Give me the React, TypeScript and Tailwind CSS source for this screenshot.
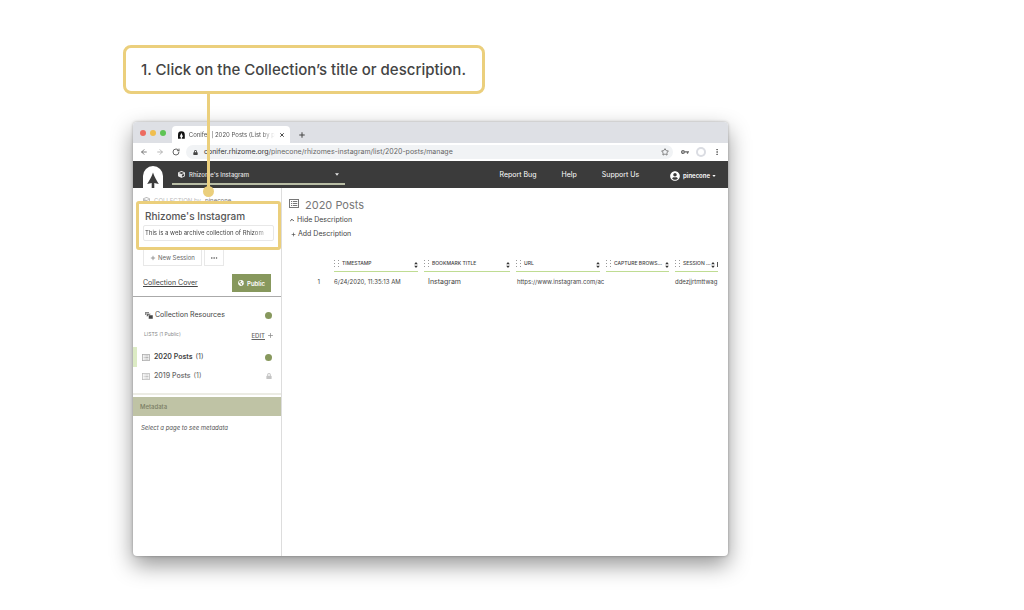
import React from "react";
import {
  ArrowLeft,
  ArrowRight,
  ChevronUp,
  MoreHorizontal,
  MoreVertical,
  Plus,
  RotateCw,
  Star,
  X,
} from "lucide-react";
import { FaCube, FaGlobeAmericas, FaLock, FaUserCircle } from "react-icons/fa";

function ListIcon({ className }: { className: string }) {
  return (
    <svg viewBox="0 0 20 18" className={className} fill="none" stroke="currentColor" aria-hidden="true">
      <rect x="1" y="1" width="18" height="16" strokeWidth="2" />
      <path d="M4 5h2.500M4 9h2.500M4 13h2.500M8 5h8.500M8 9h8.500M8 13h8.500" strokeWidth="2.200" />
    </svg>
  );
}

function ConiferLogo() {
  return (
    <svg viewBox="0 0 20 22" className="h-[22px] w-5" aria-label="Conifer">
      <path d="M0 22V10a10 10 0 0 1 20 0v12z" fill="#fff" />
      <path d="M10 6.500 C11.500 11 13.500 14 15.800 18 L11.300 17 V22 H8.700 V17 L4.200 18 C6.500 14 8.500 11 10 6.500z" fill="#3b3b3b" />
    </svg>
  );
}

function Favicon() {
  return (
    <svg viewBox="0 0 20 22" className="h-2 w-[7px]" aria-hidden="true">
      <path d="M0 22V10a10 10 0 0 1 20 0v12z" fill="#111" />
      <path d="M10 5 L15 16 H12 V22 H8 V16 H5z" fill="#fff" />
    </svg>
  );
}

function KeyIcon() {
  return (
    <svg viewBox="0 0 16 8" className="ml-2 h-1 w-2" fill="none" stroke="currentColor" strokeWidth="2.500" aria-hidden="true">
      <circle cx="4" cy="4" r="2.700" />
      <path d="M7 3.500h9M13 3.500v4" />
    </svg>
  );
}

function Caret({ className }: { className: string }) {
  return (
    <svg viewBox="0 0 8 5" className={className} fill="currentColor" aria-hidden="true">
      <path d="M0 0h8L4 5z" />
    </svg>
  );
}

function Grip() {
  return (
    <svg viewBox="0 0 5 8" className="h-2 w-[5px] shrink-0" fill="#999" aria-hidden="true">
      <path d="M0 0h1v1H0zM4 0h1v1H4zM0 3h1v1H0zM4 3h1v1H4zM0 6h1v1H0zM4 6h1v1H4z" />
    </svg>
  );
}

function SortIcon() {
  return (
    <svg viewBox="0 0 4 6" className="mt-[2px] h-[6px] w-1 shrink-0" fill="#333" aria-hidden="true">
      <path d="M2 0 3.800 2.200H.2zM2 6 .2 3.800h3.600z" />
    </svg>
  );
}

function ResourcesIcon() {
  return (
    <svg viewBox="0 0 16 14" className="h-[7px] w-2" aria-hidden="true">
      <path d="M0 0h8v6H0z" fill="#888" />
      <path d="M3 3h8v6H3z" fill="#666" stroke="#fff" strokeWidth="1" />
      <path d="M7 6h9v8H7z" fill="#444" stroke="#fff" strokeWidth="1" />
    </svg>
  );
}

function Callout() {
  return (
    <div className="relative -ml-[10px] w-fit rounded-lg border-3 border-[#ebcf7c] bg-white py-3 pr-4 pl-[15px]">
      <p className="text-[15px] leading-[19px] font-medium whitespace-nowrap text-[#444]">
        1. Click on the Collection’s title or description.
      </p>
      <span className="absolute top-full left-[81px] z-20 h-[97px] w-[3px] bg-[#ebcf7c]">
        <span className="absolute bottom-[-9px] left-[-4px] size-[11px] rounded-full bg-[#ebcf7c]" />
      </span>
    </div>
  );
}

function TabBar() {
  return (
    <div className="flex h-[21px] items-end rounded-t-[4px] bg-[#dee0e5] pl-[7px]">
      <div className="flex h-full items-center gap-1 pr-[6px]">
        <span className="size-[6px] rounded-full bg-[#ed6b60]" />
        <span className="size-[6px] rounded-full bg-[#f0be4f]" />
        <span className="size-[6px] rounded-full bg-[#5fc454]" />
      </div>
      <div className="flex h-[17px] w-[118px] items-center gap-1 rounded-t-[4px] bg-white pr-[5px] pl-[6px]">
        <Favicon />
        <span className="flex-1 mask-r-from-85% text-[6px] leading-2 whitespace-nowrap text-[#555]">
          Conifer | 2020 Posts (List by p
        </span>
        <button type="button" aria-label="Close tab" className="text-[#333]">
          <X className="size-[6px]" strokeWidth={3.5} />
        </button>
      </div>
      <button type="button" aria-label="New tab" className="mb-1 ml-2 text-[#444]">
        <Plus className="size-2" strokeWidth={3} />
      </button>
    </div>
  );
}

function AddressBar() {
  return (
    <div className="flex h-[18px] items-center bg-white pr-[7px] pl-[7px] text-[#666]">
      <button type="button" aria-label="Back">
        <ArrowLeft className="size-2" strokeWidth={2.5} />
      </button>
      <button type="button" aria-label="Forward" className="ml-2 text-[#aaa]">
        <ArrowRight className="size-2" strokeWidth={2.5} />
      </button>
      <button type="button" aria-label="Reload" className="ml-2">
        <RotateCw className="size-2" strokeWidth={3} />
      </button>
      <div className="ml-[6px] flex h-[14px] flex-1 items-center rounded-full bg-[#f1f3f5] pr-1 pl-[7px]">
        <FaLock className="mr-[6px] size-[5px] text-[#444]" />
        <span className="flex-1 text-[7px] leading-[10px] whitespace-nowrap text-[#666]">
          <span className="text-[#333]">conifer.rhizome.org</span>
          /pinecone/rhizomes-instagram/list/2020-posts/manage
        </span>
        <Star className="size-2" strokeWidth={2.5} />
      </div>
      <KeyIcon />
      <span className="ml-[7px] flex size-[10px] items-center justify-center rounded-full bg-[#dadce2]">
        <span className="size-[6px] rounded-full bg-white" />
      </span>
      <MoreVertical className="ml-[7px] size-2" strokeWidth={3} />
    </div>
  );
}

function AppHeader() {
  return (
    <header className="flex h-[27px] items-end bg-[#3b3b3b] pr-3 pl-[10px] text-white">
      <ConiferLogo />
      <button
        type="button"
        className="mb-[3px] ml-[9px] flex h-[20px] w-[173px] items-center border-b-2 border-[#b9bda5] pr-[6px] pl-[6px] text-[#e4e4e4]"
      >
        <FaCube className="mr-1 size-[7px]" />
        <span className="text-[6px] font-medium">Rhizome's Instagram</span>
        <Caret className="ml-auto h-[3px] w-1" />
      </button>
      <nav className="ml-auto flex h-full items-center pt-[2px] text-[7px]">
        <a href="#report">Report Bug</a>
        <a href="#help" className="ml-[25px]">
          Help
        </a>
        <a href="#support" className="ml-[25px]">
          Support Us
        </a>
        <button type="button" className="ml-[31px] flex items-center">
          <FaUserCircle className="mr-[3px] size-[10px]" />
          <span className="text-[6px] font-semibold">pinecone</span>
          <Caret className="ml-[2px] h-[2px] w-1" />
        </button>
      </nav>
    </header>
  );
}

function Sidebar() {
  return (
    <aside className="w-[149px] shrink-0 border-r border-[#ddd] text-[#555]">
      <section className="border-b border-[#aaa] pb-1">
        <div className="flex h-[17px] items-end pl-[10px] text-[6px] leading-2 text-[#bbb]">
          <FaCube className="mr-1 mb-[1px] size-[7px]" />
          COLLECTION by
          <a href="#pinecone" className="ml-1 text-[#777] underline">
            pinecone
          </a>
        </div>
        <div className="relative z-10 -mt-1 ml-[3px] rounded-[3px] border-3 border-[#ebcf7c] bg-white px-1 pt-[5px] pb-[6px]">
          <h1 className="pl-[2px] text-[10px] leading-[15px] font-medium whitespace-nowrap text-[#555]">
            Rhizome's Instagram
          </h1>
          <div className="mt-px rounded-[2px] border border-[#e8e8e8] px-px">
            <p className="mask-r-from-85% text-[6px] leading-[14px] whitespace-nowrap text-[#444]">
              This is a web archive collection of Rhizom
            </p>
          </div>
        </div>
        <div className="flex gap-[2px] pl-[10px]">
          <button
            type="button"
            className="flex h-4 w-[59px] items-center justify-center gap-[2px] border border-t-0 border-[#e8e8e8] text-[6px] text-[#666]"
          >
            <Plus className="size-[6px]" strokeWidth={2.5} />
            New Session
          </button>
          <button
            type="button"
            aria-label="More actions"
            className="flex h-4 w-5 items-center justify-center border border-t-0 border-[#e8e8e8]"
          >
            <MoreHorizontal className="size-2" strokeWidth={2} />
          </button>
        </div>
        <div className="mt-2 flex items-center justify-between pr-[10px] pl-[10px]">
          <a href="#cover" className="text-[7px] text-[#444] underline">
            Collection Cover
          </a>
          <button
            type="button"
            className="flex h-[18px] w-[39px] items-center justify-center gap-[3px] bg-[#87985d] text-[6px] font-semibold text-white"
          >
            <FaGlobeAmericas className="size-[6px]" />
            Public
          </button>
        </div>
      </section>

      <section className="border-b-2 border-[#ecece4] pt-[11px] pb-2">
        <div className="flex h-[14px] items-center pr-[9px] pl-3">
          <ResourcesIcon />
          <span className="ml-[2px] text-[7px] text-[#444]">Collection Resources</span>
          <span className="ml-auto size-[7px] rounded-full bg-[#87985d]" />
        </div>
        <div className="mt-[7px] flex h-3 items-center pr-[7px] pl-[11px] text-[5px] text-[#888]">
          LISTS (1 Public)
          <button type="button" className="ml-auto text-[6px] font-medium text-[#666] underline">
            EDIT
          </button>
          <button type="button" aria-label="Add list" className="ml-[2px]">
            <Plus className="size-[7px]" strokeWidth={2.5} />
          </button>
        </div>
        <ul className="mt-[6px] text-[7px]">
          <li className="flex h-[20px] items-center border-l-4 border-[#dcebc4] pr-[9px] pl-[5px] text-[#444]">
            <ListIcon className="mr-1 h-[7px] w-2 text-[#aaa]" />
            <span className="mr-[3px] font-semibold">2020 Posts</span> (1)
            <span className="ml-auto size-[7px] rounded-full bg-[#87985d]" />
          </li>
          <li className="flex h-[18px] items-center border-l-4 border-transparent pr-[9px] pl-[5px] text-[#666]">
            <ListIcon className="mr-1 h-[7px] w-2 text-[#bbb]" />
            <span className="mr-[3px] font-medium">2019 Posts</span> (1)
            <FaLock className="ml-auto size-[6px] text-[#c4c4c4]" />
          </li>
        </ul>
      </section>

      <section>
        <h2 className="mt-[2px] bg-[#bfc3a5] pl-[7px] text-[6px] leading-[19px] font-medium text-[#7a7d64]">
          Metadata
        </h2>
        <p className="pt-[7px] pl-2 text-[6px] leading-[10px] italic">Select a page to see metadata</p>
      </section>
    </aside>
  );
}

const columns = [
  { label: "TIMESTAMP", width: "w-[90px]" },
  { label: "BOOKMARK TITLE", width: "w-[92px]" },
  { label: "URL", width: "w-[90px]" },
  { label: "CAPTURE BROWS…", width: "w-[69px]" },
  { label: "SESSION …", width: "" },
];

function Bookmarks() {
  return (
    <table className="mt-[15px] w-full table-fixed text-left text-[#444]">
      <thead>
        <tr>
          <th className="w-11 p-0" aria-label="Number" />
          {columns.map((c, i) => (
            <th key={c.label} className={`${c.width} p-0 pr-[6px] font-medium last:pr-0`}>
              <div className="flex h-4 items-center border-b border-[#bfdc92]">
                <Grip />
                <span className="ml-[3px] flex-1 text-[5px] whitespace-nowrap">{c.label}</span>
                <SortIcon />
                {i === columns.length - 1 && <span className="mt-[2px] ml-[2px] h-[5px] w-px bg-[#555]" />}
              </div>
            </th>
          ))}
        </tr>
      </thead>
      <tbody className="text-[6px] leading-[20px] whitespace-nowrap">
        <tr>
          <td className="p-0 pr-[14px] text-right">1</td>
          <td className="p-0">6/24/2020, 11:35:13 AM</td>
          <td className="p-0 pl-1 text-[7px]">Instagram</td>
          <td className="p-0 pl-px">https://www.instagram.com/ac</td>
          <td className="p-0" />
          <td className="p-0">ddezjjrtmttwag</td>
        </tr>
      </tbody>
    </table>
  );
}

export default function App() {
  return (
    <div className="bg-white pt-[45px] pr-[296px] pb-[54px] pl-[133px] font-['Inter',sans-serif]">
      <Callout />
      <div className="mt-7 rounded-[4px] bg-white shadow-[0_9px_22px_rgba(0,0,0,0.42),0_0_3px_rgba(0,0,0,0.3)]">
        <TabBar />
        <AddressBar />
        <AppHeader />
        <div className="flex min-h-[368px]">
          <Sidebar />
          <main className="min-w-0 flex-1 pt-[9px] pr-[10px] pl-[7px] text-[7px] text-[#444]">
            <h2 className="flex items-center text-[11px] leading-4 text-[#777]">
              <ListIcon className="mr-[6px] mb-1 h-[9px] w-[10px] text-[#777]" />
              2020 Posts
            </h2>
            <button type="button" className="flex h-[14px] items-center gap-[2px]">
              <ChevronUp className="size-[6px]" strokeWidth={4} />
              Hide Description
            </button>
            <button type="button" className="ml-[2px] flex h-[14px] items-center gap-[2px]">
              <Plus className="size-[5px]" strokeWidth={3} />
              Add Description
            </button>
            <div className="pl-px">
              <Bookmarks />
            </div>
          </main>
        </div>
      </div>
    </div>
  );
}
